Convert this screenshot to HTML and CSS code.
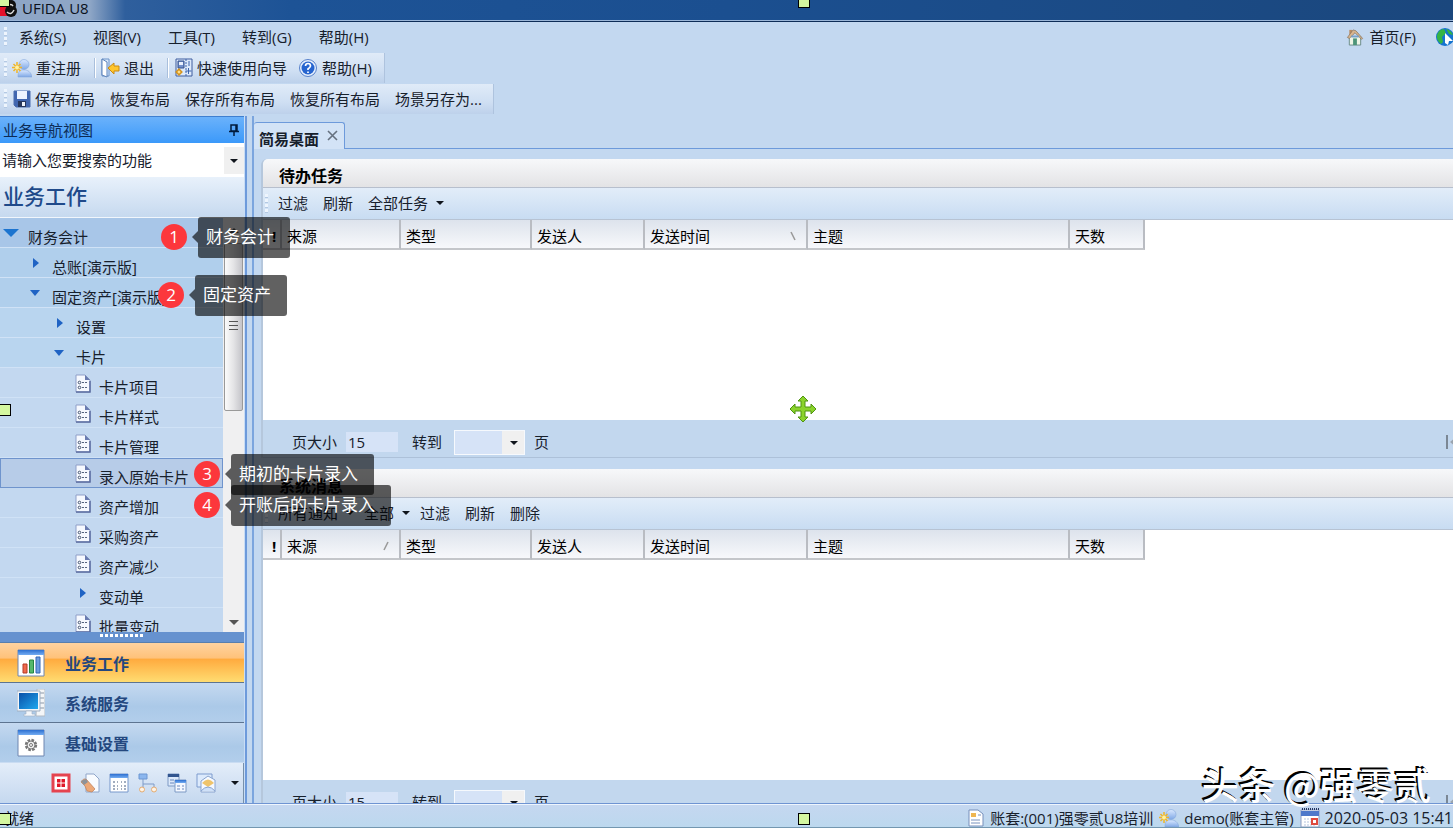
FILE: index.html
```
<!DOCTYPE html>
<html lang="zh-CN">
<head>
<meta charset="utf-8">
<title>UFIDA U8</title>
<link rel="stylesheet" href="styles.css">
</head>
<body>
<svg class="defs" aria-hidden="true">
  <defs>
    <linearGradient id="blue" x1="0" y1="0" x2="0" y2="1"><stop offset="0" stop-color="#dbe9ff"/><stop offset="1" stop-color="#7fa8e6"/></linearGradient>
    <linearGradient id="screen" x1="0" y1="0" x2="1" y2="1"><stop offset="0" stop-color="#0a50a8"/><stop offset="1" stop-color="#20a8ee"/></linearGradient>
    <linearGradient id="bar" x1="0" y1="0" x2="0" y2="1"><stop offset="0" stop-color="#2d6fd0"/><stop offset="1" stop-color="#74adf2"/></linearGradient>
    <symbol id="doc" viewBox="0 0 16 19">
      <path d="M1 1h9l5 5v12H1z" fill="#f6f9ff" stroke="#8f9fc8"/><path d="M10 1v5h5z" fill="#6a7cb0"/><path d="M1 18h14V7" fill="none" stroke="#5b6ca0" stroke-width="1.500"/>
      <circle cx="4.500" cy="8.500" r="1.300" fill="none" stroke="#44536e"/><circle cx="4.500" cy="13.500" r="1.300" fill="none" stroke="#44536e"/>
      <path d="M7 8.500h2m1 0h2M7 13.500h2m1 0h2" stroke="#55647f"/>
    </symbol>
    <symbol id="user" viewBox="0 0 20 20">
      <path d="M6 19c0-6 2-7 6-7s7 2 8 7z" fill="url(#blue)" stroke="#85a8dc" stroke-width=".6"/><circle cx="12" cy="6.500" r="5" fill="url(#blue)" stroke="#85a8dc" stroke-width=".6"/>
      <path d="M5 4v11M0 9.500h10M1.500 6l7 7M8.500 6l-7 7" stroke="#f1b526" stroke-width="1.500"/><circle cx="5" cy="9.500" r="2" fill="#fff1a0"/>
    </symbol>
  </defs>
</svg>
<div class="app">
  <header class="titlebar">
    <svg class="logo" viewBox="0 0 18 18"><path d="M0 2h10v14H0z" fill="#e3122a"/><circle cx="11" cy="5" r="5" fill="#111"/><circle cx="11" cy="11" r="6" fill="#111"/><path d="M8 6q3-3 5 0M7 12q4 4 7-2" stroke="#ddd" stroke-width="1.500" fill="none"/></svg>
    <h1>UFIDA U8</h1>
  </header>

  <nav class="menubar">
    <span class="grip"></span>
    <button>系统(S)</button><button>视图(V)</button><button>工具(T)</button><button>转到(G)</button><button>帮助(H)</button>
    <span class="menubar-right">
      <button class="home"><svg class="i18" viewBox="0 0 18 19"><path d="M3 9h12v9H3z" fill="#eef4e6" stroke="#688a87"/><path d="M3 2h3v5H3z" fill="#b98a63"/><path d="M1 10L7 2l3 1 7 8-1 1-7-7-6 6z" fill="#d9b48e" stroke="#89755e" stroke-width=".8"/><path d="M7 11h4v7H7z" fill="#4c9478"/><path d="M5 9h8" stroke="#77a1cb" stroke-width="2"/></svg>首页(F)</button>
      <svg class="i18 globe" viewBox="0 0 18 18"><circle cx="9" cy="9" r="9" fill="#1574cf"/><path d="M1 7q2-6 7-6l2 4-4 4 1 5-2 2Q0 12 1 7z" fill="#35b444"/><path d="M10 1q5 1 7 6l-4-1z" fill="#35b444"/><path d="M9 5l8 8-4 0-1 4-3-2z" fill="#fff"/></svg>
    </span>
  </nav>

  <div class="toolbar toolbar-a">
    <span class="grip"></span>
    <button><svg class="i20"><use href="#user"/></svg>重注册</button>
    <span class="sep"></span>
    <button class="exit"><svg class="i20" viewBox="0 0 20 20"><path d="M2 1h7v17H2z" fill="#d7e7fb" stroke="#6d93c8"/><path d="M2 1l5 3v15l-5-2z" fill="#fff" stroke="#5d83ba"/><path d="M8 10l6-5v3h5v5h-5v3z" fill="#ffc52c" stroke="#c98a12"/></svg>退出</button>
    <span class="sep"></span>
    <button><svg class="i20" viewBox="0 0 20 20"><path d="M3 1h16v17H3z" fill="#dce9fb" stroke="#3f5d9e"/><path d="M5 3h6v7H5z" fill="#7390cb" stroke="#34508c"/><path d="M6 4h4v3H6z" fill="#e9f1ff"/><path d="M13 1v17" stroke="#3d65ad" stroke-dasharray="2 1"/><path d="M16 3v5M15.500 10v6M12.500 13h6" stroke="#3d65ad"/><path d="M4 12l4 0v4H4z" fill="#ffe08a" stroke="#d4931c" stroke-width="1.500" transform="rotate(45 6 14)"/></svg>快速使用向导</button>
    <button class="help"><svg class="i18" viewBox="0 0 18 18"><circle cx="9" cy="9" r="8.500" fill="#e6effc" stroke="#5680cb"/><circle cx="9" cy="9" r="6.500" fill="#2765cf"/><path d="M6.500 7q0-2.500 2.500-2.500T11.500 7Q11.500 8 9 10v1M9 12.500v1.500" fill="none" stroke="#fff" stroke-width="1.700"/></svg>帮助(H)</button>
  </div>

  <div class="toolbar toolbar-b">
    <span class="grip"></span>
    <button><svg class="i18" viewBox="0 0 18 18"><path d="M1 1h16v16H3l-2-2z" fill="#4166b0" stroke="#4a6cae"/><path d="M4 1h10v8H4z" fill="#edf3ff"/><path d="M5 11h8v6H5z" fill="#26365c"/><path d="M9 12h3v4H9z" fill="#eef3fb"/></svg>保存布局</button>
    <button>恢复布局</button><button>保存所有布局</button><button>恢复所有布局</button><button>场景另存为...</button>
  </div>

  <div class="workspace">
    <aside class="sidebar">
      <div class="side-head"><h2>业务导航视图</h2><button aria-label="固定"><svg class="i14" viewBox="0 0 14 14"><path d="M4 2h6v6H4zM2 8.500h10M7 8v5M9 2v6" fill="none" stroke="#001b3d" stroke-width="1.500"/></svg></button></div>
      <div class="search"><input type="text" aria-label="搜索功能" value="请输入您要搜索的功能"><button aria-label="展开"><span class="caret"></span></button></div>
      <h3 class="side-title">业务工作</h3>
      <div class="tree-wrap">
        <ul class="tree">
          <li class="l0"><button><span class="down"></span>财务会计</button></li>
          <li class="l1"><button><span class="right"></span>总账[演示版]</button></li>
          <li class="l1"><button><span class="down"></span>固定资产[演示版]</button></li>
          <li class="l2"><button><span class="right"></span>设置</button></li>
          <li class="l2"><button><span class="down"></span>卡片</button></li>
          <li class="l3"><button><svg><use href="#doc"/></svg>卡片项目</button></li>
          <li class="l3"><button><svg><use href="#doc"/></svg>卡片样式</button></li>
          <li class="l3"><button><svg><use href="#doc"/></svg>卡片管理</button></li>
          <li class="l3 selected"><button><svg><use href="#doc"/></svg>录入原始卡片</button></li>
          <li class="l3"><button><svg><use href="#doc"/></svg>资产增加</button></li>
          <li class="l3"><button><svg><use href="#doc"/></svg>采购资产</button></li>
          <li class="l3"><button><svg><use href="#doc"/></svg>资产减少</button></li>
          <li class="l3"><button><span class="right"></span>变动单</button></li>
          <li class="l3"><button><svg><use href="#doc"/></svg>批量变动</button></li>
        </ul>
        <div class="scroll"><span class="scroll-up"></span><span class="thumb"></span><span class="scroll-down"></span></div>
      </div>
      <div class="splitter"><span></span></div>
      <nav class="modules">
        <button class="active"><svg viewBox="0 0 28 28"><path d="M1 1h26v26H1z" fill="#fff" stroke="#6e86b0"/><path d="M1 1h26v5H1z" fill="url(#bar)"/><path d="M6 15h4v9H6z" fill="#ef6a4c" stroke="#b43b26"/><path d="M12.500 11h4v13h-4z" fill="#55b86a" stroke="#258441"/><path d="M19 8h4v16h-4z" fill="#6c9ce0" stroke="#3566b2"/></svg>业务工作</button>
        <button><svg viewBox="0 0 28 28"><path d="M20 0h8v27h-9z" fill="#f4f6f8" stroke="#b1bac5"/><path d="M23 4h4m-4 5h4m-4 5h4m-4 5h4" stroke="#8c98a7"/><path d="M0 2h23v20H0z" fill="#f3f6fa" stroke="#9fb0c4"/><path d="M2 4h19v16H2z" fill="url(#screen)"/><path d="M9 22h6v3h3v2H7v-2h2z" fill="#f3f6fa" stroke="#9fb0c4" stroke-width=".6"/></svg>系统服务</button>
        <button><svg viewBox="0 0 28 28"><path d="M1 1h26v26H1z" fill="#fff" stroke="#6e86b0"/><path d="M1 1h26v5H1z" fill="url(#bar)"/><circle cx="14" cy="16" r="5" fill="none" stroke="#777" stroke-width="2.400" stroke-dasharray="2.600 1.300"/><circle cx="14" cy="16" r="4" fill="#eee" stroke="#777"/><circle cx="14" cy="16" r="1.500" fill="#fff" stroke="#777"/></svg>基础设置</button>
      </nav>
      <div class="shortcuts">
        <button aria-label="门户"><svg viewBox="0 0 20 20"><path d="M2 2h16v16H2z" fill="#fff" stroke="#e5434f" stroke-width="3"/><path d="M6 6h3.500v3.500H6zM10.500 6H14v3.500h-3.500zM6 10.500h3.500V14H6zM10.500 10.500H14V14h-3.500z" fill="#e01828"/></svg></button>
        <button aria-label="单据"><svg viewBox="0 0 20 20"><path d="M6 1h8l5 5v13H6z" fill="#f8fbff" stroke="#8fa5c9"/><path d="M1 9q3-5 6-2l8 9-3 3-5-1-2-5z" fill="#eca878" stroke="#bd7e58" stroke-width=".7"/><path d="M1 8l5-2 2 3-4 3z" fill="#8d9299"/></svg></button>
        <button aria-label="日程"><svg viewBox="0 0 20 20"><path d="M1 1h18v18H1z" fill="#fff" stroke="#7797cb"/><path d="M1 1h18v4H1z" fill="url(#bar)"/><path d="M4 9h2m2 0h1m3 0h1m2 0h2M4 13h2m2 0h1m3 0h1m2 0h2M4 16h2m2 0h1m3 0h1m2 0h2" stroke="#8492ab" stroke-width="1.500"/></svg></button>
        <button aria-label="流程"><svg viewBox="0 0 20 20"><path d="M5 6v11M5 11h11v4" fill="none" stroke="#7f9bc8"/><path d="M1 1h8v5H1z" fill="#8bb6ee" stroke="#6d96d2"/><circle cx="4" cy="16.500" r="2.500" fill="#fff3e4" stroke="#e3ab72"/><circle cx="16" cy="16.500" r="2.500" fill="#fff3e4" stroke="#e3ab72"/></svg></button>
        <button aria-label="窗口"><svg viewBox="0 0 20 20"><path d="M1 1h11v12H1z" fill="#dce9fb" stroke="#7d99c4"/><path d="M1 1h11v3H1z" fill="#31558f"/><path d="M8 7h11v12H8z" fill="#f4f8ff" stroke="#7d99c4"/><path d="M8 7h11v3H8z" fill="url(#bar)"/><path d="M3 7h4M3 10h4M10 13h3m2 0h2M10 16h3m2 0h2" stroke="#6887bc"/></svg></button>
        <button aria-label="消息"><svg viewBox="0 0 20 20"><path d="M1 1h15v13H1z" fill="#dceafc" stroke="#7c9bce"/><path d="M5 8l7-5 7 4v12H5z" fill="#f5f9ff" stroke="#89a4cf"/><path d="M6 10q6-7 12 0l-6 4z" fill="#efc46b"/><path d="M5 18q7-8 14 0" fill="#cfe1f9" stroke="#89a4cf"/></svg></button>
        <button class="more" aria-label="更多"><span class="caret"></span></button>
      </div>
    </aside>

    <main class="desktop">
      <div class="tabs"><div class="tab"><span>简易桌面</span><button aria-label="关闭"><svg class="i14" viewBox="0 0 14 14"><path d="M2 2l9 9M11 2l-9 9" stroke="#66717f" stroke-width="1.600"/></svg></button></div></div>
      <div class="panels">
        <section class="panel">
          <h2>待办任务</h2>
          <div class="panel-tools"><span class="grip"></span><button>过滤</button><button>刷新</button><button>全部任务<span class="caret"></span></button></div>
          <div class="grid">
            <table><thead><tr><th class="c0">!</th><th class="c1">来源</th><th class="c2">类型</th><th class="c3">发送人</th><th class="c4">发送时间<svg viewBox="0 0 8 10"><path d="M2 1l4 8" stroke="#999" stroke-width="1.500" fill="none"/></svg></th><th class="c5">主题</th><th class="c6">天数</th></tr></thead></table>
          </div>
          <div class="pager"><label for="s1">页大小</label><input id="s1" type="text" value="15"><label class="goto" for="p1">转到</label><span class="combo"><select id="p1"><option></option></select><span class="caret"></span></span><span>页</span>
            <button class="first" aria-label="首页"><svg viewBox="0 0 12 16"><path d="M2 1v14" stroke="#7b8794" stroke-width="2"/><path d="M11 3L5 8l6 5" fill="#9aa4af"/></svg></button></div>
        </section>
        <section class="panel tall">
          <h2>系统消息</h2>
          <div class="panel-tools"><span class="grip"></span><button>所有通知<span class="caret"></span></button><button class="all">全部<span class="caret"></span></button><button>过滤</button><button>刷新</button><button>删除</button></div>
          <div class="grid">
            <table><thead><tr><th class="c0">!</th><th class="c1">来源<svg viewBox="0 0 8 10"><path d="M6 1L2 9" stroke="#999" stroke-width="1.500" fill="none"/></svg></th><th class="c2">类型</th><th class="c3">发送人</th><th class="c4">发送时间</th><th class="c5">主题</th><th class="c6">天数</th></tr></thead></table>
          </div>
          <div class="pager"><label for="s2">页大小</label><input id="s2" type="text" value="15"><label class="goto" for="p2">转到</label><span class="combo"><select id="p2"><option></option></select><span class="caret"></span></span><span>页</span>
            <button class="first" aria-label="首页"><svg viewBox="0 0 12 16"><path d="M2 1v14" stroke="#7b8794" stroke-width="2"/><path d="M11 3L5 8l6 5" fill="#9aa4af"/></svg></button></div>
        </section>
      </div>
    </main>
  </div>

  <footer class="status">
    <span>就绪</span>
    <span class="status-item first-item"><svg class="i18" viewBox="0 0 18 18"><path d="M2 1h9l5 4v12H2z" fill="#fff" stroke="#768fbb"/><path d="M4 4h5v4H4z" fill="#efb651"/><path d="M11 6h3M4 11h9M4 14h9" stroke="#7892bf"/></svg>账套:(001)强零贰U8培训</span>
    <span class="status-item"><svg class="i20"><use href="#user"/></svg>demo(账套主管)</span>
    <span class="status-item clock"><svg class="i20" viewBox="0 0 20 20"><path d="M1 2h18v17H1z" fill="#fff" stroke="#8b9bc0"/><path d="M1 3h18v5H1z" fill="#4e78ca"/><path d="M2 1h17" stroke="#24355f" stroke-width="2" stroke-dasharray="1 1"/><path d="M4 11h12M4 14h12M4 17h12" stroke="#b4c3dd" stroke-dasharray="2 1"/><path d="M12 11h5v5h-5z" fill="#fff" stroke="#de4b3f" stroke-width="2"/></svg>2020-05-03 15:41</span>
  </footer>
</div>

<div class="note n1"><b>1</b><span>财务会计</span></div>
<div class="note n2"><b>2</b><span>固定资产</span></div>
<div class="note n3"><b>3</b><span>期初的卡片录入</span></div>
<div class="note n4"><b>4</b><span>开账后的卡片录入</span></div>
<i class="handle h-tl"></i><i class="handle h-t"></i><i class="handle h-l"></i><i class="handle h-bl"></i><i class="handle h-b"></i>
<svg class="move" viewBox="0 0 28 28"><path d="M14 1l5 5h-3v6h6V9l5 5-5 5v-3h-6v6h3l-5 5-5-5h3v-6H6v3l-5-5 5-5v3h6V6H9z" fill="#8bd32c" stroke="#4f9411"/></svg>
<div class="watermark">头条 @强零贰</div>
</body>
</html>
```

FILE: styles.css
```
* { box-sizing: border-box; }
html, body { height: 100%; }
body {
  margin: 0;
  position: relative;
  overflow: hidden;
  font: 15px/20px "Open Sans", "Noto Sans CJK SC", sans-serif;
  color: #17202c;
  background: #c3d8f0;
}
button, input, select { font: inherit; color: inherit; border: 0; padding: 0; margin: 0; background: none; border-radius: 0; }
button { display: flex; align-items: center; white-space: nowrap; }
h1, h2, h3, ul { margin: 0; padding: 0; font-weight: 400; }
ul { list-style: none; }
svg { flex: none; display: block; }
.defs { position: absolute; width: 0; height: 0; }
.i14 { width: 14px; height: 14px; }
.i18 { width: 18px; height: 18px; }
.i20 { width: 20px; height: 20px; }
.caret { flex: none; border: 4px solid transparent; border-top-color: #10151c; border-bottom: 0; }
.grip { flex: none; width: 3px; height: 20px; background: repeating-linear-gradient(#eef5fd 0 3px, #b4c9e3 3px 4px, transparent 4px 5px); }

.app { height: 100%; display: flex; flex-direction: column; }

.titlebar {
  flex: none; height: 22px; display: flex; align-items: center; gap: 4px;
  border-bottom: 1px solid #0d2c57; box-shadow: inset 0 -1px #9bb6d8;
  background: linear-gradient(90deg, #8ea6c6 0, #8ea6c6 90px, #2f5f9d 125px, #1d5396 20%, #1b4f90 50%, #1b477d 100%);
}
.titlebar h1 { font-size: 15px; line-height: 18px; color: #0b111b; padding-bottom: 5px; }
.logo { width: 18px; height: 18px; margin-bottom: 4px; }

.menubar { flex: none; height: 31px; display: flex; align-items: center; gap: 27px; padding: 0 0 2px 4px; }
.menubar .grip { margin-right: -15px; }
.menubar-right { margin-left: auto; display: flex; align-items: center; gap: 20px; overflow: hidden; }
.home { gap: 5px; }
.globe { margin-right: -1px; }

.toolbar { flex: none; align-self: flex-start; height: 30px; display: flex; align-items: center; padding-left: 4px; border-right: 1px solid #aec3de; background: linear-gradient(#e0ebf8, #cfdff3 60%, #bdd1eb); }
.toolbar button { gap: 4px; }
.toolbar-a { padding-right: 12px; gap: 5px; }
.toolbar-a .sep { width: 2px; height: 20px; background: #a9bfdc; border-right: 1px solid #fff; margin-left: 8px; margin-right: -1px; }
.toolbar-a .help { margin-left: 7px; gap: 5px; }
.toolbar-b { margin: 1px 0 2px; padding-right: 11px; gap: 15px; }
.toolbar-b .grip { margin-right: -9px; }

.workspace { flex: 1; min-height: 0; display: flex; gap: 5px; border-bottom: 1px solid #6f94d2; }

.sidebar { flex: none; width: 247px; display: flex; flex-direction: column; border-right: 2px solid #6d9adb; padding-right: 1px; background: #c9ddf5; }
.side-head { flex: none; height: 27px; display: flex; align-items: center; justify-content: space-between; padding: 0 3px; border-top: 1px solid #3f7fd0; background: linear-gradient(#6bb2fb, #3b99fa); }
.side-head h2 { font-size: 15px; color: #0d2b55; }
.search { flex: none; height: 34px; display: flex; background: #fff; }
.search input { flex: 1; min-width: 0; padding-left: 2px; }
.search button { width: 20px; margin: 4px 0 3px; justify-content: center; background: #f0f0f0; }
.side-title { flex: none; height: 41px; font: 500 21px/36px "Noto Sans CJK SC", sans-serif; color: #204a8a; padding-left: 3px; background: linear-gradient(#e8f1fb, #c6d9ef); border-bottom: 1px solid #f1f6fc; }

.tree-wrap { flex: 1; min-height: 0; display: flex; overflow: hidden; }
.tree { flex: 1; min-width: 0; overflow: hidden; }
.tree li { height: 30px; border-bottom: 1px solid #d0e2f6; background: #c3d8f0; overflow: hidden; }
.tree button { width: 100%; height: 100%; padding-top: 8px; }
.tree svg, .tree .down, .tree .right { margin-bottom: 7px; }
.tree .l0 { background: #a8c6e8; }
.tree .l1 { background: #b0cfec; }
.tree .l2 { background: #b9d5ef; }
.tree .l0 button { padding-left: 3px; }
.tree .l1 button { padding-left: 30px; }
.tree .l2 button { padding-left: 54px; }
.tree .l3 button { padding-left: 75px; gap: 8px; }
.tree svg { width: 16px; height: 19px; }
.down { flex: none; border: 5px solid transparent; border-top: 6px solid #1f63c4; border-bottom: 0; margin-right: 12px; }
.l0 .down { border-width: 8px 8px 0; border-top-color: #1c74cf; margin-right: 9px; }
.right { flex: none; border: 5px solid transparent; border-left: 6px solid #1f63c4; border-right: 0; margin-left: 3px; margin-right: 13px; }
.l3 .right { margin-left: 5px; margin-right: 5px; }
.tree .selected { background: #b7cce8; border: 1px solid #6f94cd; }
.tree .selected button { padding-left: 74px; }

.scroll { flex: none; width: 21px; display: flex; flex-direction: column; align-items: center; background: #f0f0f1; }
.scroll-up { border: 5px solid transparent; border-bottom-color: #555; border-top: 0; margin: 10px 0; }
.thumb { width: 19px; height: 168px; border: 1px solid #999; border-radius: 2px; background: repeating-linear-gradient(#555 0 1px, transparent 1px 4px) center/9px 12px no-repeat, linear-gradient(90deg, #fbfbfb, #e4e4e6 50%, #c4c4c9); }
.scroll-down { border: 5px solid transparent; border-top-color: #555; border-bottom: 0; margin: auto 0 7px; }

.splitter { flex: none; height: 11px; background: #6692cf; border-bottom: 1px solid #587fae; display: flex; justify-content: center; padding-top: 2px; }
.splitter span { width: 44px; height: 3px; background: repeating-linear-gradient(90deg, #fff 0 3px, transparent 3px 5px); }

.modules { flex: none; }
.modules button { width: 100%; height: 40px; gap: 20px; padding-left: 17px; font: 700 16px/20px "Noto Sans CJK SC", sans-serif; color: #24487f; border-bottom: 1px solid #5d7490; background: linear-gradient(#c5d9f0, #abc9e8 60%, #b2ceeb); }
.modules .active { background: linear-gradient(#ffd3a0, #ffc27a 38%, #ffab3f 42%, #ffdc71); }
.modules button:last-child { border-bottom-color: #c9dcf2; }
.modules svg { width: 28px; height: 28px; }
.shortcuts { flex: none; height: 40px; display: flex; align-items: center; justify-content: flex-end; gap: 9px; padding-right: 4px; background: linear-gradient(#e3edf9, #c5d8ef); border-right: 1px solid #7890aa; }
.shortcuts svg { width: 20px; height: 20px; }
.shortcuts .more { margin-left: 6px; }

.desktop { flex: 1; min-width: 0; display: flex; flex-direction: column; border-left: 2px solid #7ba5de; overflow: hidden; }
.tabs { flex: none; display: flex; padding-top: 6px; }
.tabs::after { content: ""; flex: 1; border-bottom: 1px solid #6d9adb; }
.tab { height: 27px; display: flex; gap: 7px; align-items: center; padding: 5px 4px 0 5px; border: 1px solid #6d9adb; border-left: 0; border-bottom: 0; border-radius: 3px 3px 0 0; background: #d3e3f6; font-weight: 600; }
.tab button { padding-bottom: 6px; }
.panels { flex: 1; min-height: 0; display: flex; flex-direction: column; gap: 11px; padding: 10px 0 0 7px; overflow: hidden; }
.panel { flex: none; border-left: 2px solid #b5c7dc; border-radius: 6px 0 0 0; }
.panel h2 { height: 29px; font: 700 16px/32px "Noto Sans CJK SC", sans-serif; color: #000; padding-left: 16px; background: linear-gradient(#f7f8fa, #e3e3e5); border-bottom: 1px solid #b7bfcd; border-radius: 5px 0 0 0; }
.panel-tools { height: 32px; display: flex; align-items: center; gap: 15px; padding-left: 2px; background: linear-gradient(#e2edf9, #c8dcf2); border-bottom: 1px solid #b7c3d3; }
.panel-tools .grip { margin-right: -5px; }
.panel-tools button { gap: 8px; padding-bottom: 2px; }
.panel-tools .all { margin-left: -5px; }
.panel-tools .all + button { margin-left: -5px; }
.grid { height: 200px; background: #fff; }
.tall .grid { height: 250px; }
table { border-collapse: separate; border-spacing: 0; table-layout: fixed; width: 882px; }
th { height: 30px; padding: 3px 0 0 5px; font-weight: 400; text-align: left; color: #000; border-right: 2px solid #b9bcc2; border-bottom: 2px solid #c4c6ca; background: linear-gradient(#dde3ec, #f7f8fb); white-space: nowrap; }
th svg { float: right; width: 8px; height: 10px; margin: 5px 9px 0 0; }
.c0 { width: 19px; padding-left: 9px; font-weight: 700; }
.c1 { width: 119px; } .c2 { width: 131px; } .c3 { width: 113px; } .c4 { width: 163px; } .c5 { width: 262px; } .c6 { width: 75px; }
.pager { height: 38px; display: flex; align-items: center; padding: 7px 0 0 29px; border-bottom: 1px solid #adc1d9; background: #c2d7ee; }
.pager input { width: 52px; height: 20px; margin-left: 9px; padding-left: 2px; background: #d6e3f7; }
.goto { margin: 0 12px 0 14px; }
.combo { position: relative; display: flex; margin-right: 9px; }
.combo select { width: 71px; height: 25px; appearance: none; border: 1px solid #f6f9fd; background: linear-gradient(90deg, #d6e3f7 0 47px, #f0f0f0 47px); }
.combo .caret { position: absolute; right: 7px; top: 11px; pointer-events: none; }
.first { margin-left: auto; margin-right: -4px; }
.first svg { width: 12px; height: 16px; }

.status { flex: none; height: 24px; display: flex; align-items: center; gap: 4px; padding: 3px 0 0 4px; background: linear-gradient(#c5d7f0, #bcd8ee); border-top: 1px solid #eef5fd; border-bottom: 1px solid #7397b0; white-space: nowrap; overflow: hidden; }
.status-item { display: flex; align-items: center; gap: 5px; }
.first-item { margin-left: auto; }
.status-item + .status-item { margin-left: 2px; }
.clock { font-size: 16px; }

.note { position: absolute; display: flex; align-items: center; gap: 11px; height: 41px; color: #fff; font: 17px/20px "Open Sans", "Noto Sans CJK SC", sans-serif; white-space: nowrap; }
.note b { width: 26px; height: 26px; margin-bottom: 2px; border-radius: 50%; background: #fc373c; text-align: center; font-weight: 400; line-height: 25px; }
.note span { position: relative; height: 41px; line-height: 40px; padding: 0 16px 0 8px; border-radius: 3px; background: rgba(0, 0, 0, .62); }
.note span::before { content: ""; position: absolute; left: -6px; top: 14px; border: 6px solid transparent; border-right-color: rgba(0, 0, 0, .62); border-left: 0; }
.n1 { left: 161px; top: 217px; }
.n2 { left: 158px; top: 275px; }
.n3 { left: 194px; top: 454px; }
.n4 { left: 194px; top: 485px; }
.handle { position: absolute; width: 12px; height: 12px; background: #d4f7a0; border: 1px solid #000; }
.h-tl { left: -2px; top: -5px; }
.h-t { left: 798px; top: -4px; }
.h-l { left: -1px; top: 404px; }
.h-bl { left: -1px; top: 813px; }
.h-b { left: 798px; top: 813px; }
.move { position: absolute; left: 789px; top: 395px; width: 28px; height: 28px; }
.watermark { position: absolute; right: 22px; bottom: 20px; font: 500 37px/48px "Noto Sans CJK SC", sans-serif; color: #fff; text-shadow: -2px -2px 0 #000, -1px -1px 0 #000; white-space: nowrap; }
```
